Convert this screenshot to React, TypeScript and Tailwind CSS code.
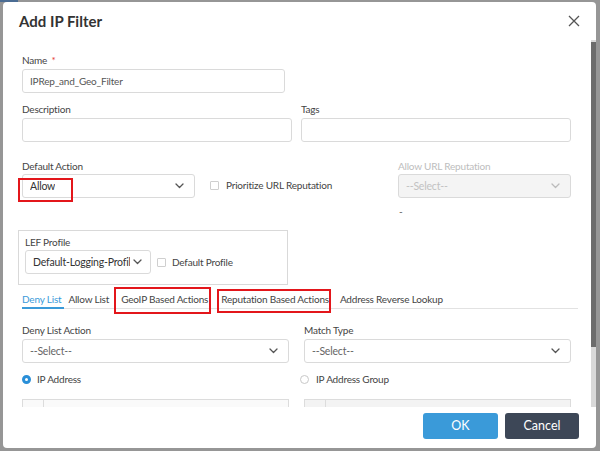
import type { ReactNode } from 'react'

const font = { fontFamily: 'Lato, "Open Sans", sans-serif' }

function Chevron({ color = '#555' }: { color?: string }) {
  return (
    <svg width="9" height="6" viewBox="0 0 9 6" fill="none" className="shrink-0">
      <path d="M1 1 L4.5 4.5 L8 1" stroke={color} strokeWidth="1.3" strokeLinecap="round" strokeLinejoin="round" />
    </svg>
  )
}

function Label({ children, muted }: { children: ReactNode; muted?: boolean }) {
  return <div className={`leading-[14px] ${muted ? 'text-[#bdbdbd]' : 'text-[#444]'}`}>{children}</div>
}

function Select({
  value,
  placeholder,
  disabled,
  className = '',
  children,
}: {
  value?: string
  placeholder?: boolean
  disabled?: boolean
  className?: string
  children?: ReactNode
}) {
  return (
    <div
      className={`relative flex h-[24px] items-center justify-between gap-[3px] rounded-[3px] border border-[#dadada] pl-[7px] pr-[10px] text-[10.5px] ${
        disabled ? 'bg-[#f4f4f4] text-[#c2c2c2]' : 'bg-white'
      } ${placeholder && !disabled ? 'text-[#666]' : ''} ${!placeholder && !disabled ? 'text-[#333]' : ''} ${className}`}
    >
      <span className="overflow-hidden whitespace-nowrap">{value}</span>
      <Chevron color={disabled ? '#bbb' : '#555'} />
      {children}
    </div>
  )
}

function Checkbox() {
  return <span className="inline-block h-[9px] w-[9px] shrink-0 rounded-[1px] border border-[#cfcfcf] bg-white" />
}

function Tab({
  label,
  active,
  boxed,
  className = '',
}: {
  label: string
  active?: boolean
  boxed?: string
  className?: string
}) {
  return (
    <div
      className={`relative -mb-px border-b-2 pb-px leading-[14px] ${
        active ? 'border-[#3a9ad9] pr-[3px] text-[#3a9ad9]' : 'border-transparent text-[#444]'
      } ${className}`}
    >
      {label}
      {boxed ? <span className={`pointer-events-none absolute border-2 border-[#e3161b] ${boxed}`} /> : null}
    </div>
  )
}

export default function App() {
  return (
    <div
      className="h-[451px] w-[600px] overflow-hidden bg-[#969696] text-[10px] leading-[14px] tracking-[-0.2px]"
      style={font}
    >
      <div className="flex h-[2px]">
        <div className="w-[18px] bg-[#4b6c93]" />
      </div>
      <div className="ml-[3px] flex h-[446px] w-[593px] flex-col overflow-hidden rounded-[4px] bg-white">
        <div className="flex h-[38px] shrink-0 items-center justify-between pl-[16px] pr-[16px]">
          <div className="text-[15px] font-bold tracking-normal text-[#333]">Add IP Filter</div>
          <svg width="12" height="12" viewBox="0 0 12 12">
            <path d="M1 1 L11 11 M11 1 L1 11" stroke="#555" strokeWidth="1.3" />
          </svg>
        </div>

        <div className="flex h-[367px] shrink-0">
          <div className="flex-1 overflow-hidden pl-[19px] pr-[17px] pt-[13px]">
            <Label>
              Name <span className="ml-[2px] text-[#e53935]">*</span>
            </Label>
            <div className="mt-[2px] flex h-[24px] w-[263px] items-center rounded-[3px] border border-[#dadada] pl-[7px] text-[#555]">
              IPRep_and_Geo_Filter
            </div>

            <div className="mt-[9px] grid w-[549px] grid-cols-2 gap-x-[9px]">
              <div>
                <Label>Description</Label>
                <div className="mt-[2px] h-[24px] rounded-[3px] border border-[#dadada]" />
              </div>
              <div>
                <Label>Tags</Label>
                <div className="mt-[2px] h-[24px] rounded-[3px] border border-[#dadada]" />
              </div>
            </div>

            <div className="mt-[17px] grid w-[549px] grid-cols-3 items-start gap-x-[15px]">
              <div>
                <Label>Default Action</Label>
                <Select value="Allow" className="mt-px">
                  <span className="pointer-events-none absolute -left-[5px] top-[3px] h-[24px] w-[55px] border-2 border-[#e3161b]" />
                </Select>
              </div>
              <div className="flex items-center gap-[7px] pt-[19px] text-[#444]">
                <Checkbox />
                Prioritize URL Reputation
              </div>
              <div>
                <Label muted>Allow URL Reputation</Label>
                <Select value="--Select--" placeholder disabled className="mt-px" />
                <div className="mt-[6px] pl-px text-[#555]">-</div>
              </div>
            </div>

            <div className="-ml-[4px] mt-[12px] h-[55px] w-[270px] border border-[#d9d9d9] pl-[6px] pt-[4px]">
              <Label>LEF Profile</Label>
              <div className="mt-px flex items-center gap-[6px]">
                <Select value="Default-Logging-Profile" className="w-[126px] !pr-[8px]" />
                <Checkbox />
                <span className="text-[#444]">Default Profile</span>
              </div>
            </div>

            <div className="mt-[7px] flex w-[556px] border-b border-[#e2e2e2]">
              <Tab label="Deny List" active />
              <Tab label="Allow List" className="ml-[4px]" />
              <Tab
                label="GeoIP Based Actions"
                className="ml-[12px]"
                boxed="-left-[7px] -right-[3px] -top-[5px] -bottom-[7px]"
              />
              <Tab
                label="Reputation Based Actions"
                className="ml-[13px]"
                boxed="-left-[4px] -right-[2px] -top-[3px] -bottom-[6px]"
              />
              <Tab label="Address Reverse Lookup" className="ml-[11px]" />
            </div>

            <div className="mt-[14px] grid w-[549px] grid-cols-2 gap-x-[15px]">
              <div>
                <Label>Deny List Action</Label>
                <Select value="--Select--" placeholder className="mt-[2px]" />
                <div className="mt-[9px] flex items-center gap-[6px] text-[#444]">
                  <span className="inline-block h-[9px] w-[9px] rounded-full border-[3px] border-[#2a8fd8] bg-white" />
                  IP Address
                </div>
                <div className="mt-[13px] flex h-[20px] border border-[#dcdcdc] bg-[#fafafa]">
                  <div className="w-[21px] border-r border-[#dcdcdc]" />
                </div>
              </div>
              <div>
                <Label>Match Type</Label>
                <Select value="--Select--" placeholder className="mt-[2px]" />
                <div className="-ml-[4px] mt-[9px] flex items-center gap-[7px] text-[#444]">
                  <span className="inline-block h-[9px] w-[9px] rounded-full border border-[#c8c8c8] bg-white" />
                  IP Address Group
                </div>
                <div className="mt-[13px] flex h-[20px] border border-[#dcdcdc] bg-[#f3f3f3]">
                  <div className="w-[21px] border-r border-[#dcdcdc]" />
                </div>
              </div>
            </div>
          </div>
          <div className="flex w-[5px] shrink-0 flex-col bg-[#d9d9d9]">
            <div className="mt-[2px] h-[305px] bg-[#6c6c6c]" />
          </div>
        </div>

        <div className="flex flex-1 justify-end gap-[7px] pr-[17px] pt-[6px]">
          <button className="h-[26px] w-[75px] rounded-[3px] bg-[#3a9ad9] text-[12.5px] tracking-normal text-white">
            OK
          </button>
          <button className="h-[26px] w-[74px] rounded-[3px] bg-[#3d4757] text-[12.5px] tracking-normal text-white">
            Cancel
          </button>
        </div>
      </div>
    </div>
  )
}
